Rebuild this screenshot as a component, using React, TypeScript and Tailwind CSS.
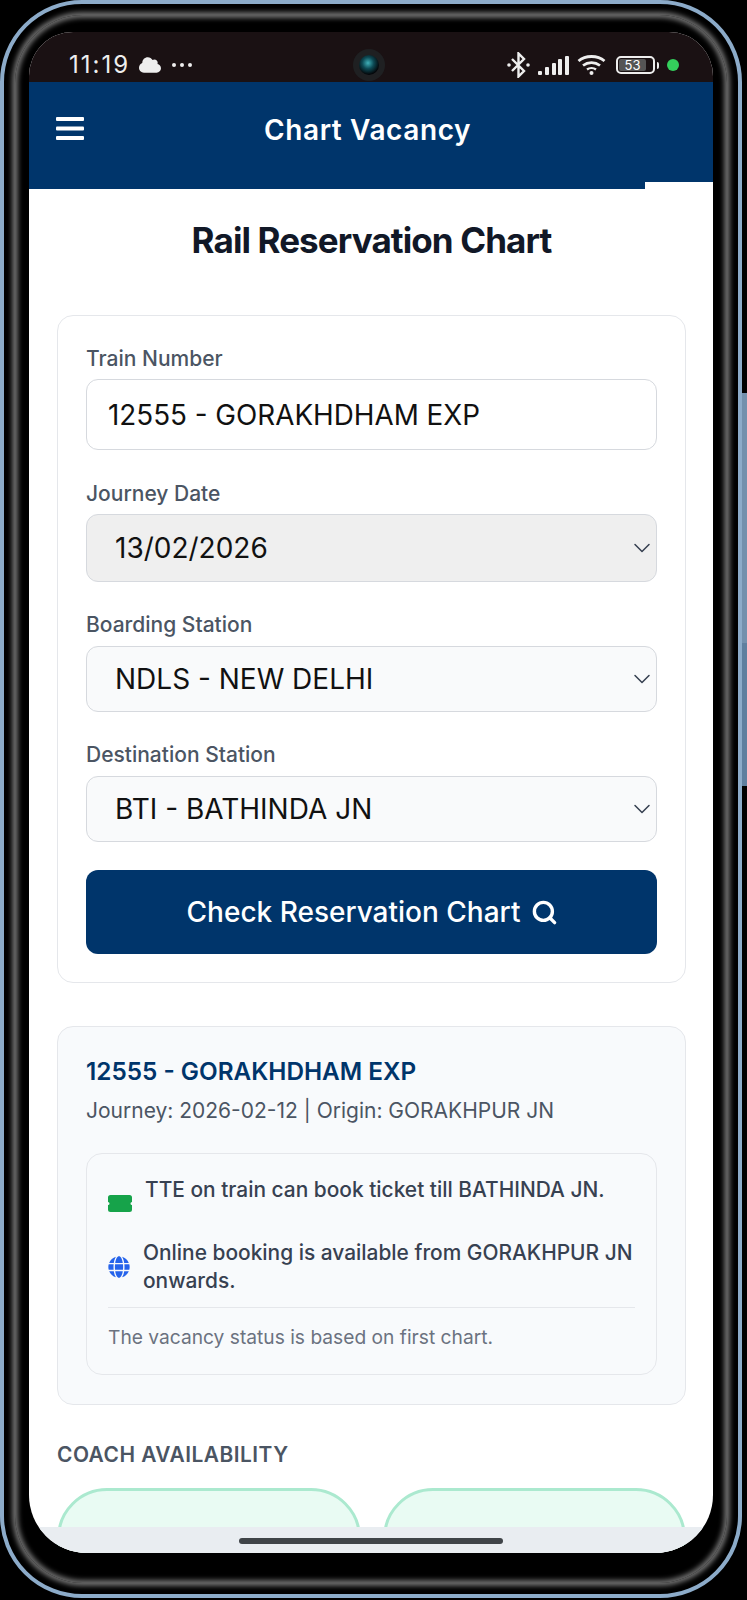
import { ChevronDown, Search } from 'lucide-react';
import { FaCloud, FaGlobe } from 'react-icons/fa';

function Field({ label, value, gray, last }: { label: string; value: string; gray?: boolean; last?: boolean }) {
  return (
    <div className={last ? 'mb-[28px]' : 'mb-[29px]'}>
      <div className={`text-[21px] leading-[28px] font-medium text-[#4b5563] ${gray ? 'mb-[6px]' : 'mb-[7px]'}`}>{label}</div>
      <div
        className={`flex items-center justify-between rounded-[12px] border border-[#d6d9de] pl-[28px] text-[28px] text-[#111] ${
          gray ? 'h-[68px] bg-[#efefef]' : 'h-[66px] bg-[#f9fafb]'
        }`}
      >
        <span>{value}</span>
        <ChevronDown className="h-[28px] w-[28px] text-[#374151]" strokeWidth={1.3} />
      </div>
    </div>
  );
}

function StatusBar() {
  return (
    <div className="relative flex h-[50px] shrink-0 items-center justify-between bg-[#1a1113] pl-[40px] pr-[34px] pt-[16px] text-white">
      <div className="flex items-center">
        <span className="text-[24px] tracking-[2px] text-[#eee]">11:19</span>
        <FaCloud className="ml-[9px] h-[22px] w-[22px] text-[#eee]" />
        <span className="ml-[11px] flex gap-[4px]">
          <i className="h-[4px] w-[4px] rounded-full bg-[#eee]" />
          <i className="h-[4px] w-[4px] rounded-full bg-[#eee]" />
          <i className="h-[4px] w-[4px] rounded-full bg-[#eee]" />
        </span>
      </div>
      <div className="flex items-center">
        <svg width="23" height="26" viewBox="0 0 23 26" fill="none" stroke="#eee" strokeWidth="2.400">
          <path d="M5 7l12 12-5.500 5.500V1.500L17 7 5 19" />
          <circle cx="2" cy="13" r="1.800" fill="#eee" stroke="none" />
          <circle cx="21" cy="13" r="1.800" fill="#eee" stroke="none" />
        </svg>
        <svg className="ml-[8px]" width="31" height="19" viewBox="0 0 31 19" fill="#eee">
          <rect x="0" y="15" width="4" height="4" rx="1" />
          <rect x="7" y="11" width="4" height="8" rx="1" />
          <rect x="14" y="7" width="4" height="12" rx="1" />
          <rect x="20" y="3" width="4" height="16" rx="1" />
          <rect x="27" y="0" width="4" height="19" rx="1" />
        </svg>
        <svg className="ml-[8px]" width="29" height="20" viewBox="0 0 29 20" fill="none" stroke="#eee" strokeWidth="2.800">
          <path d="M1.500 6c7-6 19-6 26 0" />
          <path d="M6 10.500c5-3.800 12-3.800 17 0" />
          <path d="M10 14.500c2.500-1.800 6.500-1.800 9 0" strokeWidth="2.400" />
          <circle cx="14.500" cy="18" r="2" fill="#eee" stroke="none" />
        </svg>
        <div className="ml-[10px] flex h-[18px] w-[39px] items-center rounded-[5px] border-2 border-[#eee] p-[1px]">
          <div className="flex h-full w-[27px] items-center justify-center rounded-[2px] bg-[#555] text-[13px] leading-none text-white">53</div>
        </div>
        <div className="ml-[2px] h-[7px] w-[2px] rounded-r bg-[#eee]" />
        <div className="ml-[8px] h-[12px] w-[12px] rounded-full bg-[#34d05c]" />
      </div>
      {/* front camera */}
      <div className="absolute left-[324px] top-[17px] flex h-[32px] w-[32px] items-center justify-center rounded-full bg-[#1f2022]">
        <div className="h-[20px] w-[20px] rounded-full bg-[radial-gradient(circle_at_45%_40%,#3fb0b8_0%,#0d4a55_35%,#04070a_70%)]" />
      </div>
    </div>
  );
}

export default function App() {
  return (
    <div className="relative h-[1600px] w-[747px] overflow-hidden bg-black font-['Inter',sans-serif]">
      {/* side buttons */}
      <div className="absolute right-0 top-[393px] h-[250px] w-[6px] bg-[#7390ad]" />
      <div className="absolute right-0 top-[643px] h-[143px] w-[6px] bg-[#5f7f9f]" />

      <div className="relative h-[1598px] w-[742px] rounded-[82px] border-[4px] border-[#8cabc9] bg-black p-[11px]">
        {/* soft metal band round the glass */}
        <div className="h-full w-full rounded-[68px] bg-black px-[14px] pb-[30px] pt-[17px] shadow-[0_0_5px_3px_#6e6e6e,inset_0_0_5px_3px_#6e6e6e]">
          <div className="relative flex h-[1521px] flex-col overflow-hidden rounded-t-[44px] rounded-b-[58px] bg-white">
            <StatusBar />

            <header className="relative flex h-[107px] shrink-0 items-start bg-[#00356b] text-white">
              <svg className="ml-[27px] mt-[35px]" width="28" height="23" viewBox="0 0 28 23" fill="white">
                <rect y="0" width="28" height="4" rx="1" />
                <rect y="9.500" width="28" height="4" rx="1" />
                <rect y="19" width="28" height="4" rx="1" />
              </svg>
              <div className="ml-[180px] mt-[28px] text-[28px] leading-[40px] font-semibold tracking-[0.6px]">Chart Vacancy</div>
              <div className="absolute bottom-0 right-0 h-[7px] w-[68px] bg-white" />
            </header>

            <main className="pl-[28px] pr-[27px]">
              <h1 className="mb-[54px] mt-[30px] text-center text-[35px] leading-[42px] font-bold tracking-[-0.9px] text-[#111827]">
                Rail Reservation Chart
              </h1>

              <section className="rounded-[16px] border border-[#e5e7eb] px-[28px] pb-[28px] pt-[29px]">
                <div className="mb-[30px]">
                  <div className="mb-[6px] text-[21px] leading-[28px] font-medium text-[#4b5563]">Train Number</div>
                  <div className="flex h-[71px] items-center rounded-[12px] border border-[#d6d9de] pl-[21px] pt-[2px] text-[27.8px] text-[#111]">
                    12555 - GORAKHDHAM EXP
                  </div>
                </div>
                <Field label="Journey Date" value="13/02/2026" gray />
                <Field label="Boarding Station" value="NDLS - NEW DELHI" />
                <Field label="Destination Station" value="BTI - BATHINDA JN" last />
                <button className="flex h-[84px] w-full items-center justify-center gap-[11px] rounded-[12px] bg-[#00356b] pl-[2px] text-[28px] font-medium text-white">
                  Check Reservation Chart
                  <Search className="h-[27px] w-[27px]" strokeWidth={3} />
                </button>
              </section>

              <section className="mt-[43px] rounded-[16px] border border-[#e5e7eb] bg-[#f8fafc] px-[28px] pb-[29px] pt-[27px]">
                <div className="text-[24.3px] leading-[34px] font-semibold text-[#00356b]">12555 - GORAKHDHAM EXP</div>
                <div className="mt-[8px] text-[21px] leading-[30px] text-[#4b5563]">Journey: 2026-02-12 | Origin: GORAKHPUR JN</div>
                <div className="mt-[27px] rounded-[16px] border border-[#e5e7eb] px-[21px] pb-[23px] pt-[22px]">
                  <div className="flex text-[20.9px] leading-[28px] font-medium text-[#374151]">
                    <svg className="mt-[19px] shrink-0" width="24" height="17" viewBox="0 0 24 17" fill="#16a34a">
                      <path d="M2.500 0h19A2.500 2.500 0 0 1 24 2.500V7a1.500 1.500 0 0 0 0 3v4.500a2.500 2.500 0 0 1-2.500 2.500h-19A2.500 2.500 0 0 1 0 14.500V10a1.500 1.500 0 0 0 0-3V2.500A2.500 2.500 0 0 1 2.500 0z" />
                    </svg>
                    <span className="ml-[13px]">TTE on train can book ticket till BATHINDA JN.</span>
                  </div>
                  <div className="mt-[27px] flex items-center text-[20.9px] leading-[27.500px] font-medium text-[#374151]">
                    <FaGlobe className="h-[22px] w-[22px] shrink-0 text-[#2563eb]" />
                    <span className="-mr-[4px] ml-[13px]">Online booking is available from GORAKHPUR JN onwards.</span>
                  </div>
                  <div className="mt-[13px] border-t border-[#e5e7eb] pt-[15px] text-[19.2px] leading-[28px] text-[#6b7280]">
                    The vacancy status is based on first chart.
                  </div>
                </div>
              </section>

              <div className="mt-[36px] text-[20.9px] leading-[28px] font-semibold tracking-[0.5px] text-[#4b5563]">COACH AVAILABILITY</div>
              <div className="mt-[19px] grid grid-cols-2 gap-[22px]">
                <div className="h-[120px] rounded-[50px] border-[3px] border-[#abe9cf] bg-[#e9fbf3]" />
                <div className="h-[120px] rounded-[50px] border-[3px] border-[#abe9cf] bg-[#e9fbf3]" />
              </div>
            </main>

            {/* gesture bar sits on top of the scrolled page */}
            <div className="absolute bottom-0 left-0 right-0 flex h-[26px] justify-center bg-[#e9edf1] pt-[11px]">
              <div className="h-[6px] w-[264px] rounded-full bg-[#3f4448]" />
            </div>
          </div>
        </div>
      </div>
    </div>
  );
}
